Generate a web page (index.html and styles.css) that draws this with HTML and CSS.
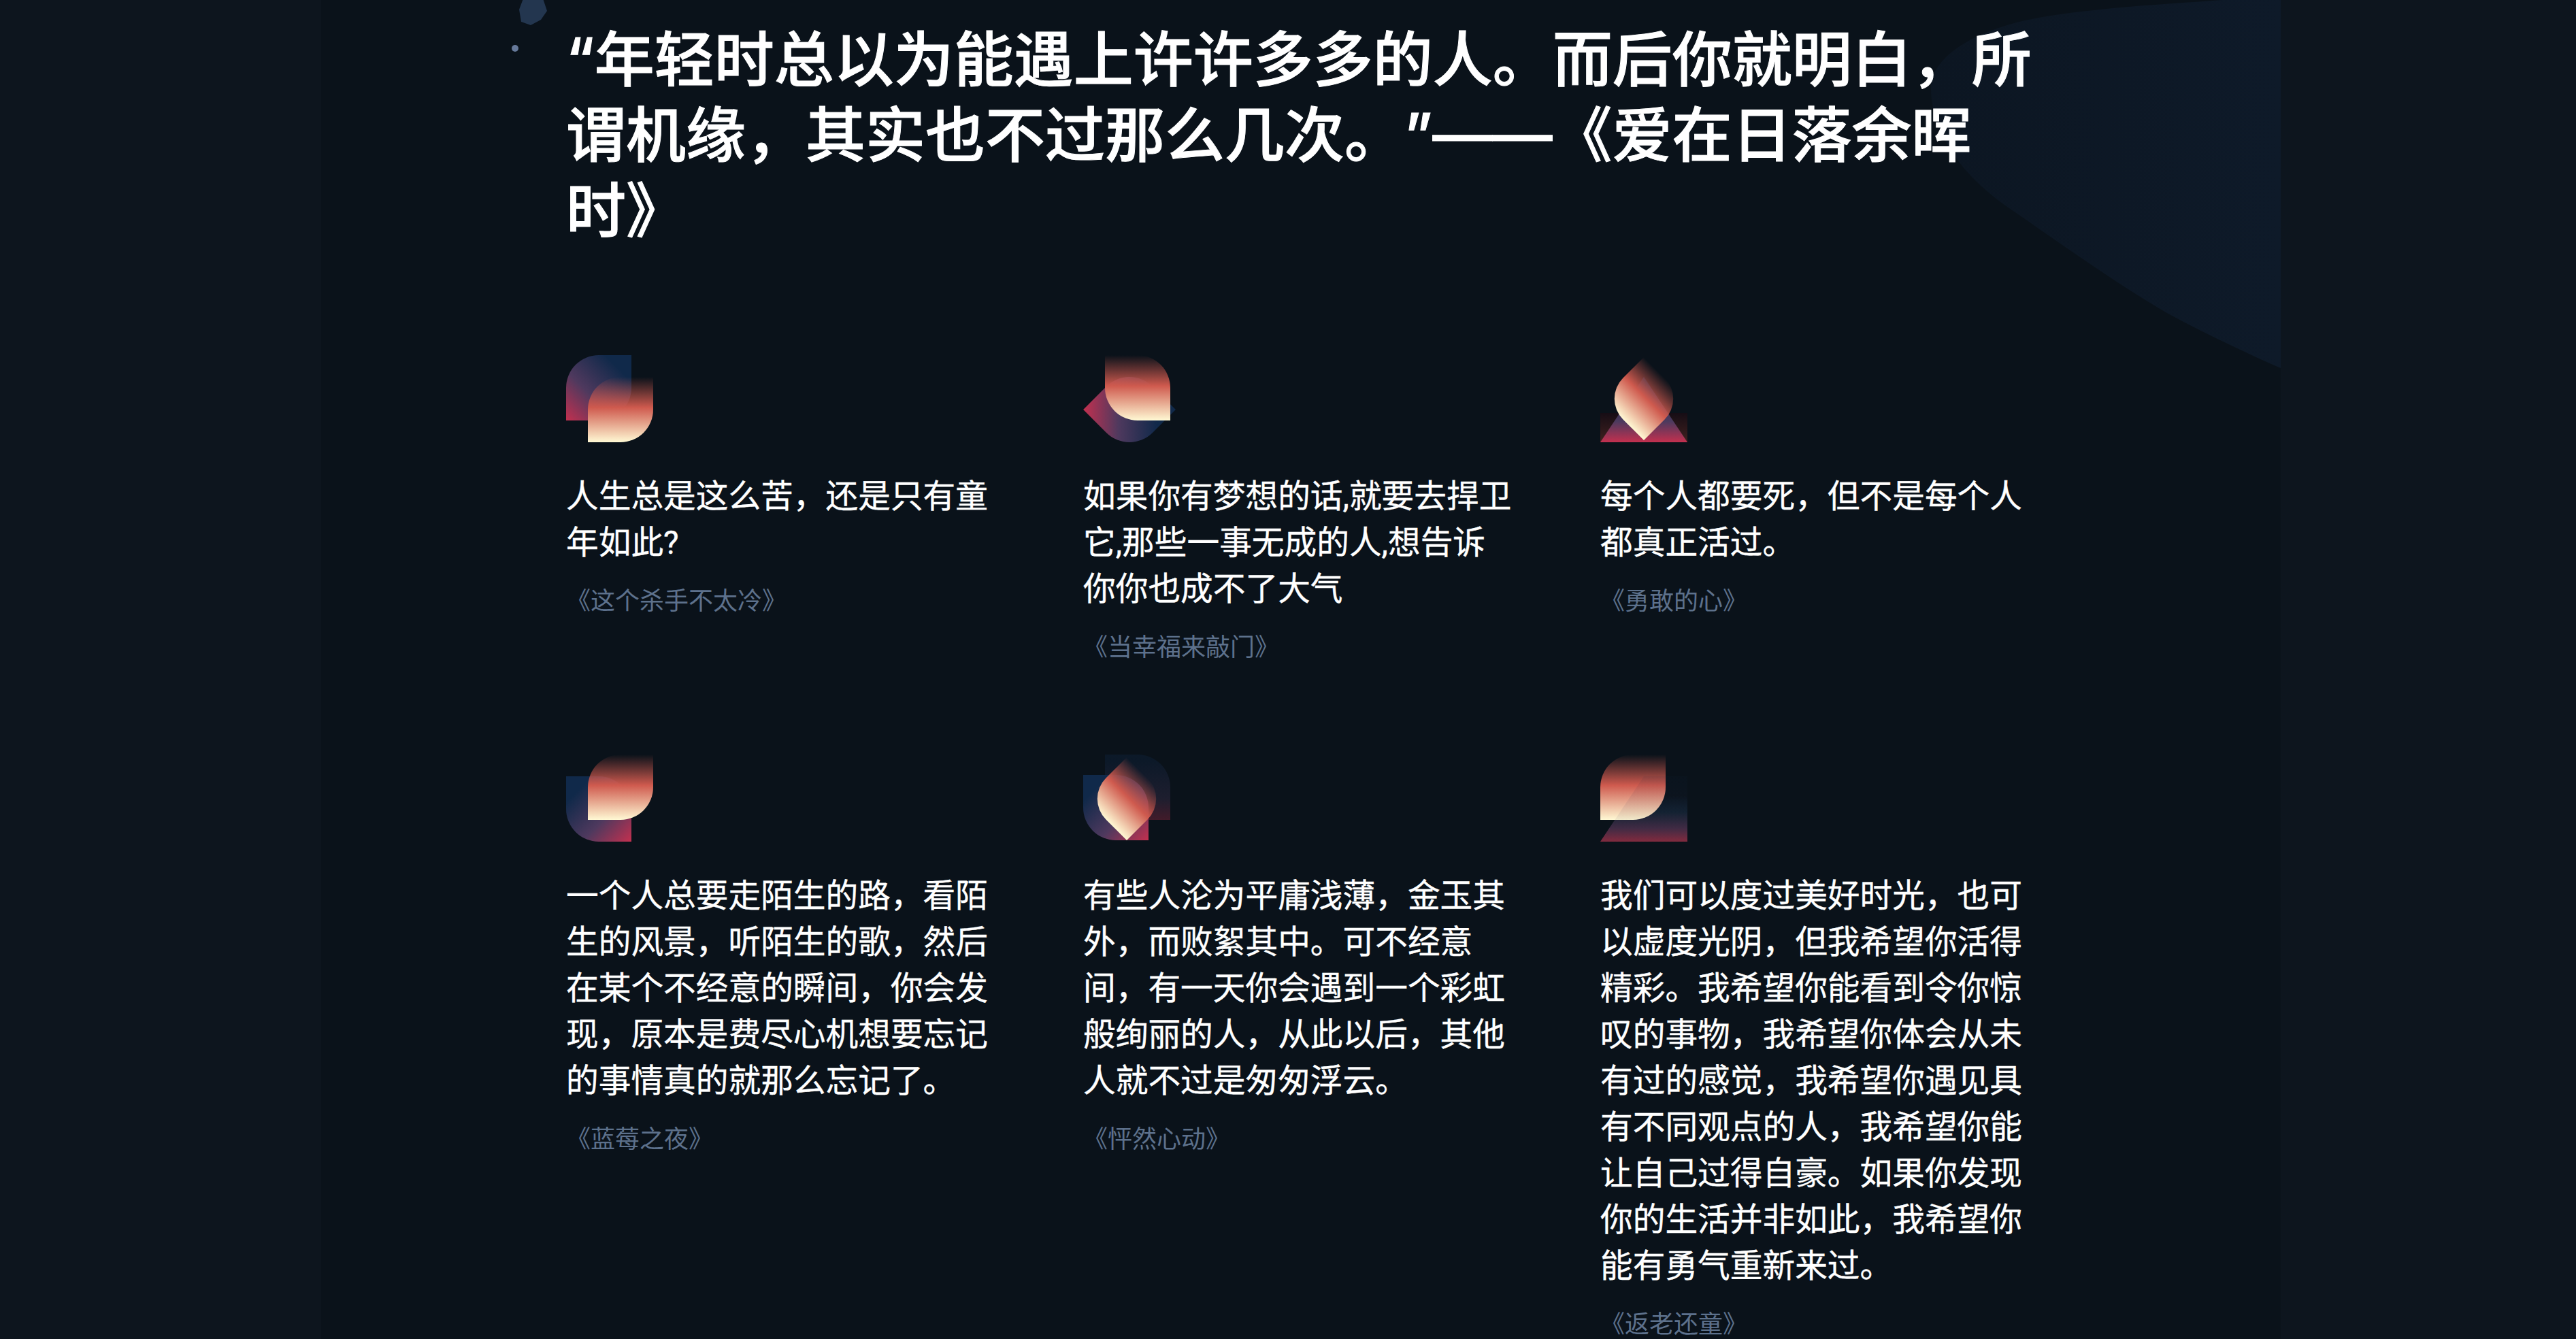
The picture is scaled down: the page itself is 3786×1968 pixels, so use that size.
FILE: index.html
```html
<!DOCTYPE html>
<html lang="zh-CN">

<head>
    <meta charset="UTF-8">
    <meta name="viewport" content="width=device-width, initial-scale=1.0">
    <title>电影台词</title>
    <link rel="stylesheet" href="styles.css">
</head>

<body>

    <!-- shared gradients and shapes -->
    <svg class="defs" width="0" height="0">
        <defs>
            <linearGradient id="warm" x1="0" y1="0" x2="0" y2="1">
                <stop offset="0" stop-color="#c9564c" stop-opacity="0" />
                <stop offset="0.47" stop-color="#cf5a4e" />
                <stop offset="1" stop-color="#fff9d4" />
            </linearGradient>
            <linearGradient id="cool-tr" x1="1" y1="0" x2="0" y2="1">
                <stop offset="0.2" stop-color="#10294a" />
                <stop offset="0.62" stop-color="#4f395e" />
                <stop offset="1" stop-color="#c3304f" />
            </linearGradient>
            <linearGradient id="cool-tl" x1="0" y1="0" x2="1" y2="1">
                <stop offset="0.2" stop-color="#10294a" />
                <stop offset="0.62" stop-color="#4f395e" />
                <stop offset="1" stop-color="#c3304f" />
            </linearGradient>
            <linearGradient id="cool-down" x1="0" y1="0" x2="0" y2="1">
                <stop offset="0.1" stop-color="#10294a" />
                <stop offset="0.68" stop-color="#4c3a5e" />
                <stop offset="1" stop-color="#c3304f" />
            </linearGradient>
            <linearGradient id="dim-down" x1="0" y1="0" x2="0" y2="1">
                <stop offset="0.3" stop-color="#0f2236" stop-opacity="0" />
                <stop offset="0.55" stop-color="#10202f" />
                <stop offset="0.8" stop-color="#3c2a42" />
                <stop offset="1" stop-color="#7c2a3d" />
            </linearGradient>
            <linearGradient id="shade" x1="0" y1="0" x2="0" y2="1">
                <stop offset="0" stop-color="#160d15" />
                <stop offset="1" stop-color="#41211f" />
            </linearGradient>
            <linearGradient id="glow" x1="0" y1="0" x2="1" y2="0">
                <stop offset="0" stop-color="#0c1622" />
                <stop offset="1" stop-color="#0e1a29" />
            </linearGradient>
            <!-- square, top left and bottom right rounded -->
            <path id="leaf-a" d="M48 0H96V48A48 48 0 0 1 48 96H0V48A48 48 0 0 1 48 0Z" />
            <!-- square, top right and bottom left rounded -->
            <path id="leaf-b" d="M0 0H48A48 48 0 0 1 96 48V96H48A48 48 0 0 1 0 48Z" />
            <polygon id="wedge" points="0,130 64,34 128,34 128,130" />
        </defs>
    </svg>

    <main class="page">

        <!-- background shapes -->
        <svg class="decor" width="2880" height="1968" viewBox="472 0 2880 1968">
            <path fill="url(#glow)"
                d="M3352 0H3267C3170 7 3030 14 2953 36C2885 56 2838 90 2838 130C2838 180 2868 248 2953 306C3010 345 3100 410 3183 459C3240 490 3300 518 3352 541Z" />
            <polygon fill="#23364f" points="772,-10 796,-8 804,16 795,29 780,37 766,32 763,14" />
            <circle fill="#66799a" cx="757" cy="71" r="5" />
        </svg>

        <h1 class="title">“年轻时总以为能遇上许许多多的人。而后你就明白，所谓机缘，其实也不过那么几次。”——《爱在日落余晖时》</h1>

        <div class="quotes">

            <div class="quote">
                <svg class="icon" width="140" height="130" viewBox="0 0 140 130">
                    <use href="#leaf-a" fill="url(#cool-tr)" transform="translate(0 2)" />
                    <use href="#leaf-a" fill="url(#warm)" transform="translate(32 34)" />
                </svg>
                <p class="text">人生总是这么苦，还是只有童年如此?</p>
                <p class="movie">《这个杀手不太冷》</p>
            </div>

            <div class="quote">
                <svg class="icon" width="140" height="130" viewBox="0 0 140 130">
                    <use href="#leaf-a" fill="url(#cool-tr)" transform="translate(68 82) rotate(45) translate(-48 -48)" />
                    <use href="#leaf-b" fill="url(#warm)" transform="translate(32 2)" />
                </svg>
                <p class="text">如果你有梦想的话,就要去捍卫它,那些一事无成的人,想告诉你你也成不了大气</p>
                <p class="movie">《当幸福来敲门》</p>
            </div>

            <div class="quote">
                <svg class="icon" width="140" height="130" viewBox="0 0 140 130">
                    <rect fill="url(#shade)" x="0" y="87" width="128" height="43" />
                    <polygon fill="url(#cool-down)" points="0,130 64,34 128,130" />
                    <use href="#leaf-b" fill="url(#warm)" transform="translate(64 66) rotate(45) scale(0.9) translate(-48 -48)" />
                </svg>
                <p class="text">每个人都要死，但不是每个人都真正活过。</p>
                <p class="movie">《勇敢的心》</p>
            </div>

            <div class="quote">
                <svg class="icon" width="140" height="130" viewBox="0 0 140 130">
                    <use href="#leaf-b" fill="url(#cool-tl)" transform="translate(0 34)" />
                    <use href="#leaf-a" fill="url(#warm)" transform="translate(32 2)" />
                </svg>
                <p class="text">一个人总要走陌生的路，看陌生的风景，听陌生的歌，然后在某个不经意的瞬间，你会发现，原本是费尽心机想要忘记的事情真的就那么忘记了。</p>
                <p class="movie">《蓝莓之夜》</p>
            </div>

            <div class="quote">
                <svg class="icon" width="140" height="130" viewBox="0 0 140 130">
                    <use href="#leaf-b" fill="url(#cool-down)" opacity="0.3" transform="translate(32 2)" />
                    <use href="#leaf-b" fill="url(#cool-tl)" transform="translate(0 32)" />
                    <use href="#leaf-b" fill="url(#warm)" transform="translate(64 67) rotate(45) scale(0.9) translate(-48 -48)" />
                </svg>
                <p class="text">有些人沦为平庸浅薄，金玉其外，而败絮其中。可不经意间，有一天你会遇到一个彩虹般绚丽的人，从此以后，其他人就不过是匆匆浮云。</p>
                <p class="movie">《怦然心动》</p>
            </div>

            <div class="quote">
                <svg class="icon" width="140" height="130" viewBox="0 0 140 130">
                    <use href="#wedge" fill="url(#dim-down)" />
                    <use href="#leaf-a" fill="url(#warm)" transform="translate(0 2)" />
                    <use href="#wedge" fill="url(#cool-down)" opacity="0.08" />
                </svg>
                <p class="text">我们可以度过美好时光，也可以虚度光阴，但我希望你活得精彩。我希望你能看到令你惊叹的事物，我希望你体会从未有过的感觉，我希望你遇见具有不同观点的人，我希望你能让自己过得自豪。如果你发现你的生活并非如此，我希望你能有勇气重新来过。</p>
                <p class="movie">《返老还童》</p>
            </div>

        </div>
    </main>

</body>

</html>
```

FILE: styles.css
```css
html,
body {
    margin: 0;
    height: 1968px;
    overflow: hidden;
}

body {
    background-color: #0d151e;
    font-family: Roboto, "Noto Sans CJK SC", sans-serif;
    color: #fff;
    text-spacing-trim: space-all;
}

.defs {
    position: absolute;
}

.page {
    position: relative;
    isolation: isolate;
    box-sizing: border-box;
    width: 2880px;
    height: 1968px;
    margin-left: 472px;
    padding: 32px 0 0 360px;
    background-color: #0a121a;
}

.decor {
    position: absolute;
    top: 0;
    left: 0;
    z-index: -1;
}

.title {
    width: 2160px;
    margin: 0 0 155px;
    font-family: Inter, "Noto Sans CJK SC", sans-serif;
    font-size: 88px;
    line-height: 111px;
    font-weight: 500;
    -webkit-text-stroke: 1px #fff;
}

.quotes {
    display: grid;
    grid-template-columns: repeat(3, 632px);
    column-gap: 128px;
    row-gap: 130px;
    align-items: start;
}

.icon {
    display: block;
    overflow: visible;
}

.text {
    margin: 46px 0 0;
    font-size: 47.7px;
    line-height: 68px;
    -webkit-text-stroke: 0.4px #fff;
}

.movie {
    margin: 27px 0 0;
    font-size: 36px;
    line-height: 50px;
    color: #5d718c;
}
```
